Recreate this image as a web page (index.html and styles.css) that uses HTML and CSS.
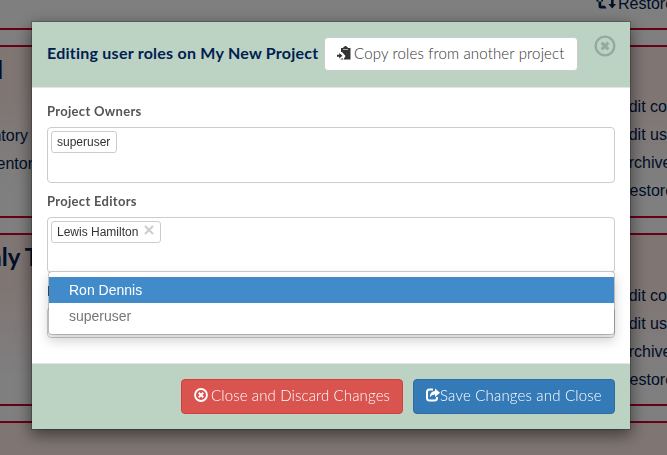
FILE: index.html
```html
<!DOCTYPE html>
<html lang="en">
<head>
<meta charset="utf-8">
<title>Project roles</title>
<link rel="stylesheet" href="styles.css">
</head>
<body>
<main class="page">
  <section class="card card-first">
    <ul class="actions"><li><svg class="retweet" viewBox="0 0 20 14"><path d="M2.500 0v10q0 2.500 2.500 2.500h5.500L9 9.800H5.300V0zM15 0v8h-2.600l3.800 4.500L20 8h-2.400V0zM.500 4h6.500v1.500H.5z"/></svg>Restore</li></ul>
  </section>
  <section class="card">
    <div class="summary"><h2 class="name-one">Regional</h2><p>My Inventory</p><p class="longer">New Inventory</p></div>
    <ul class="actions"><li>Edit content</li><li>Edit users</li><li>Archive</li><li>Restore</li></ul>
  </section>
  <section class="card card-lower">
    <div class="summary"><h2 class="name-two">Only Test</h2></div>
    <ul class="actions"><li>Edit content</li><li>Edit users</li><li>Archive</li><li>Restore</li></ul>
  </section>
  <section class="card"></section>
</main>
<div class="backdrop">
  <div class="modal" role="dialog">
    <header class="modal-header">
      <h4>Editing user roles on My New Project</h4>
      <button class="btn btn-default"><svg class="paste" viewBox="0 0 14 14"><path d="M4 2h2.300V1h1.200V0h2v1h1.200v1H13.500v11.500H6.500l2-3.500-3.500-4H4z"/><path class="clip" d="M6 3h5v.6H6z"/><path d="M0 8.800h2.200V7l3.300 2.700-3.300 2.700v-1.600H0zM3 13.500h2.800V12z"/></svg><span>Copy roles from another project</span></button>
      <button class="close" aria-label="Close"><svg viewBox="0 0 20 20"><circle cx="10" cy="10" r="8.500"/><path class="cross" d="M7 7l6 6M13 7l-6 6"/></svg></button>
    </header>
    <div class="modal-body">
      <label>Project Owners</label>
      <div class="field"><span class="tag">superuser</span></div>
      <label>Project Editors</label>
      <div class="field"><span class="tag">Lewis Hamilton<svg class="remove" viewBox="0 0 10 10"><path d="M1 1l8 8M9 1L1 9"/></svg></span>
        <ul class="dropdown"><li class="active">Ron Dennis</li><li>superuser</li></ul>
      </div>
      <label>Project Viewers</label>
      <div class="field field-short"></div>
    </div>
    <footer class="modal-footer">
      <button class="btn btn-danger"><svg class="discard" viewBox="0 0 20 20"><circle cx="10" cy="10" r="8.500"/><path d="M6.800 6.800l6.400 6.400M13.200 6.800l-6.400 6.400"/></svg><span>Close and Discard Changes</span></button>
      <button class="btn btn-primary"><svg class="share" viewBox="0 0 14 14"><path class="frame" d="M7 1.500H3.500Q1 1.500 1 4v6q0 2.500 2.500 2.500h5Q11 12.500 11 10V9"/><path class="arrow" d="M9 .5l5 4.200-5 4.200V6.500Q5.800 6.400 3.800 9.300 4 3.200 9 3z"/></svg><span>Save Changes and Close</span></button>
    </footer>
  </div>
</div>
</body>
</html>
```

FILE: styles.css
```css
* { box-sizing: border-box; }
html, body { height: 100%; margin: 0; overflow: hidden; }
body { font: 14px/20px "Liberation Sans", Arial, sans-serif; background: #fff; }
h2, h4, p, ul { margin: 0; padding: 0; }
ul { list-style: none; }

.page { height: 455px; overflow: hidden; display: flex; flex-direction: column; gap: 15px; }
.card {
  flex: none;
  height: 173px;
  display: flex;
  border: solid #d00030;
  border-width: 2px 0;
  background: linear-gradient(#ffeae6, #ffeae6 25%, #fff 85%);
  color: #002050;
  font-size: 16px;
  line-height: 28px;
}
.card-first { height: 30px; background: #fff; border-top: 0; }
.card-first .actions { padding: 0; margin-top: -10px; }
.summary { width: 0; flex: none; padding-top: 7px; }
.summary h2, .summary p { width: 160px; margin-left: -132px; text-align: right; }
.summary .longer { margin-left: -119px; }
.summary h2 { font: bold 24px/32px Lato, sans-serif; margin-bottom: 36px; }
.summary .name-one { margin-left: -157px; }
.summary .name-two { width: auto; margin: -1px 0 0 -31px; text-align: left; white-space: nowrap; }
.actions { margin-left: 618px; padding-top: 46px; white-space: nowrap; }
.card-lower .actions { padding-top: 47px; }
.retweet { width: 20px; height: 14px; margin-left: -22px; margin-right: 2px; fill: #002050; vertical-align: -1px; }

.backdrop { position: fixed; inset: 0; background: rgba(0, 0, 0, .5); padding: 21px 0 0 31px; }
.modal {
  width: 600px;
  height: 409px;
  background: #fff;
  background-clip: padding-box;
  border: 1px solid rgba(0, 0, 0, .2);
  box-shadow: 0 5px 15px rgba(0, 0, 0, .5);
  display: flex;
  flex-direction: column;
}
.modal-header {
  height: 66px;
  flex: none;
  display: flex;
  align-items: flex-start;
  padding: 15px;
  background: #bcd3c3;
  border-bottom: 1px solid #e5e5e5;
}
h4 { width: 277px; flex: none; white-space: nowrap; font: bold 16px/32px Lato, sans-serif; letter-spacing: .24px; color: #002050; }
.btn {
  display: flex;
  align-items: center;
  padding: 0 12px;
  border: 1px solid #ccc;
  border-radius: 4px;
  background: #fff;
  color: #333;
  font: 300 15px/20px Lato, sans-serif;
  letter-spacing: .15px;
  white-space: nowrap;
}
.btn svg { flex: none; }
.btn-default { width: 254px; height: 34px; }
.btn-default span { margin-top: -3px; }
.paste { width: 14px; height: 14px; margin-right: 3px; margin-top: -2px; fill: #333; }
.paste .clip { fill: #fff; }
.close { border: 0; padding: 0; margin: -2px 0 0 16px; width: 22px; height: 22px; background: none; }
.close svg { width: 22px; height: 22px; fill: none; stroke: #97a99d; stroke-width: 2.2; }
.close .cross { stroke-width: 2.8; }

.modal-body { flex: 1; padding: 14px 15px 0; display: flex; flex-direction: column; }
label { height: 20px; margin-bottom: 5px; font: bold 13px/19px Lato, sans-serif; letter-spacing: .3px; color: #555; }
.field {
  position: relative;
  height: 56px;
  flex: none;
  margin-bottom: 9px;
  padding: 3px;
  border: 1px solid #ccc;
  border-radius: 4px;
  display: flex;
  align-items: flex-start;
}
.field-short { height: 31px; margin-bottom: 0; }
.tag { height: 22px; padding: 0 6px 0 5px; border: 1px solid #ccc; border-radius: 3px; font-size: 12px; line-height: 20px; color: #333; display: flex; }
.remove { width: 10px; height: 10px; margin: 3px 0 0 6px; stroke: #ccc; stroke-width: 2; }
.dropdown {
  position: absolute;
  z-index: 2;
  top: 53px;
  left: 0;
  width: 567px;
  height: 64px;
  padding: 5px 0;
  background: #fff;
  background-clip: padding-box;
  border: 1px solid rgba(0, 0, 0, .2);
  border-radius: 4px;
  box-shadow: 0 6px 12px rgba(0, 0, 0, .175);
}
.dropdown li { height: 26px; padding: 3px 20px; color: #777; }
.dropdown .active { background: #428bca; color: #fff; }

.modal-footer {
  height: 66px;
  flex: none;
  display: flex;
  justify-content: flex-end;
  gap: 10px;
  padding: 15px;
  background: #bcd3c3;
  border-top: 1px solid #e5e5e5;
}
.modal-footer .btn { height: 35px; color: #fff; padding: 0 12px; }
.modal-footer .btn-danger { width: 222px; background: #d9534f; border-color: #d43f3a; letter-spacing: .12px; }
.modal-footer .btn-primary { width: 202px; background: #337ab7; border-color: #2e6da4; letter-spacing: .18px; }
.discard { width: 14px; height: 14px; margin: -4px 3px 0 0; fill: none; stroke: #fff; stroke-width: 2.7; }
.share { width: 14px; height: 14px; margin-top: -4px; }
.modal-footer span { margin-top: -3px; }
.frame { fill: none; stroke: #fff; stroke-width: 2; }
.arrow { fill: #fff; }
```
